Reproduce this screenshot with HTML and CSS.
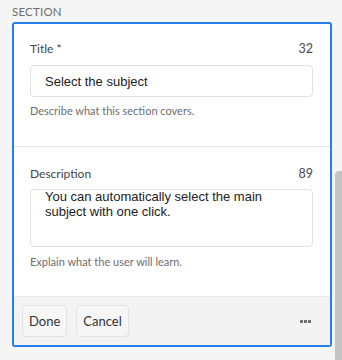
FILE: index.html
```html
<!DOCTYPE html>
<html>
<head>
<meta charset="utf-8">
<link rel="stylesheet" href="styles.css">
</head>
<body>
<div class="page">
  <div class="heading">SECTION</div>
  <div class="card">
    <div class="section first">
      <div class="row">
        <span class="label">Title *</span>
        <span class="count">32</span>
      </div>
      <div class="input">Select the subject</div>
      <div class="help">Describe what this section covers.</div>
    </div>
    <div class="section second">
      <div class="row">
        <span class="label">Description</span>
        <span class="count">89</span>
      </div>
      <div class="textarea">You can automatically select the main<br>subject with one click.</div>
      <div class="help help2">Explain what the user will learn.</div>
    </div>
    <div class="footer">
      <button class="btn">Done</button>
      <button class="btn">Cancel</button>
      <span class="more"><i></i><i></i><i></i></span>
    </div>
  </div>
</div>
<div class="scrollbar"></div>
</body>
</html>
```
FILE: styles.css
```css
html, body {
  margin: 0;
  padding: 0;
  background: #f5f5f5;
  height: 360px;
  overflow: hidden;
}
.page {
  padding: 4px 10px 0 12px;
  font-family: Lato, "Noto Sans", sans-serif;
}
.heading {
  font-size: 11.5px;
  line-height: 16px;
  color: #6e6e6e;
  letter-spacing: 0.2px;
  margin-bottom: 2px;
}
.card {
  width: 316px;
  border: 2px solid #2680eb;
  border-radius: 3px;
  background: #fff;
}
.section {
  padding: 16px 17px 27px 16px;
}
.second {
  border-top: 1px solid #e6e6e6;
  padding-top: 18px;
  padding-bottom: 26px;
}
.row {
  display: flex;
  justify-content: space-between;
  align-items: center;
  height: 16px;
}
.label {
  font-size: 12px;
  color: #444;
}
.count {
  font-size: 12.5px;
  color: #4b4b4b;
}
.input {
  margin-top: 9px;
  height: 30px;
  border: 1px solid #e1e1e1;
  border-radius: 4px;
  padding: 0 14px;
  display: flex;
  align-items: center;
  font-family: "Liberation Sans", Arial, sans-serif;
  font-size: 13px;
  color: #222;
}
.textarea {
  margin-top: 8px;
  height: 58px;
  border: 1px solid #e1e1e1;
  border-radius: 4px;
  padding: 0 14px;
  box-sizing: border-box;
  font-family: "Liberation Sans", Arial, sans-serif;
  font-size: 13px;
  line-height: 14.5px;
  color: #222;
  overflow: hidden;
}
.help {
  margin-top: 6px;
  font-size: 11px;
  line-height: 16px;
  color: #6e6e6e;
}
.help2 {
  margin-top: 7px;
}
.footer {
  border-top: 1px solid #e8e8e8;
  background: #f3f3f3;
  padding: 8px 19px 8px 8px;
  display: flex;
  align-items: center;
  gap: 9px;
}
.btn {
  height: 32px;
  padding: 0 6px;
  border: 1px solid #e3e3e3;
  border-radius: 4px;
  background: #f6f6f6;
  font-family: Lato, "Noto Sans", sans-serif;
  font-size: 13px;
  color: #333;
}
.more {
  margin-left: auto;
  display: flex;
  gap: 1px;
}
.more i {
  width: 3px;
  height: 3px;
  background: #6f6f6f;
}
.scrollbar {
  position: absolute;
  left: 335px;
  top: 171px;
  width: 7px;
  height: 189px;
  background: #c4c4c4;
  border-radius: 4px 0 0 0;
}
```
